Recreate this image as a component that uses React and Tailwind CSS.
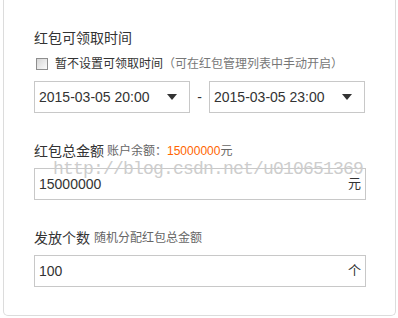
import React from "react";

const Arrow = () => (
  <svg width="10" height="6" viewBox="0 0 10 6" className="shrink-0">
    <path d="M0 0 H10 L5 6 Z" fill="#333" />
  </svg>
);

const DateSelect = ({ value }) => (
  <div className="w-[156px] h-[32px] border border-[#c8c8c8] bg-white flex items-center justify-between pl-[4px] pr-[12px]">
    <span className="text-[14px] leading-[16px] text-[#333]">{value}</span>
    <Arrow />
  </div>
);

const UnitInput = ({ value, unit }) => (
  <div className="w-[332px] h-[32px] border border-[#c8c8c8] bg-white flex items-center justify-between pl-[4px] pr-[4px]">
    <span className="text-[14px] leading-[14px] text-[#333]">{value}</span>
    <span className="text-[13px] leading-[14px] text-[#333]">{unit}</span>
  </div>
);

export default function App() {
  return (
    <div
      className="w-[398px] h-[318px] bg-white overflow-hidden"
      style={{ fontFamily: '"Liberation Sans", "Noto Sans CJK SC", sans-serif' }}
    >
      <div className="relative ml-[3px] w-[393px] border-x border-b border-[#dcdcdc] rounded-b-[5px] pl-[30px] pt-[28px] pb-[28px]">
        <div className="h-[20px] leading-[20px] text-[14px] text-[#333]">红包可领取时间</div>

        <div className="mt-[6px] h-[20px] flex items-center">
          <div className="ml-[2px] w-[12px] h-[12px] border border-[#8e8e8e] bg-gradient-to-br from-[#d6d6d6] to-[#fbfbfb]" />
          <span className="ml-[7px] text-[12px] text-[#333]">暂不设置可领取时间</span>
          <span className="text-[12px] text-[#777]">（可在红包管理列表中手动开启）</span>
        </div>

        <div className="mt-[7px] flex items-center">
          <DateSelect value="2015-03-05 20:00" />
          <span className="w-[19px] text-center text-[14px] text-[#333]">-</span>
          <DateSelect value="2015-03-05 23:00" />
        </div>

        <div className="mt-[28px] h-[20px] flex items-center">
          <span className="text-[14px] text-[#333]">红包总金额</span>
          <span className="ml-[3px] text-[12px] text-[#666]">账户余额：</span>
          <span className="text-[12px] text-[#ff6600]">15000000</span>
          <span className="text-[12px] text-[#666]">元</span>
        </div>
        <div className="mt-[7px]">
          <UnitInput value="15000000" unit="元" />
        </div>

        <div className="mt-[28px] h-[20px] flex items-center">
          <span className="text-[14px] text-[#333]">发放个数</span>
          <span className="ml-[4px] text-[12px] text-[#666]">随机分配红包总金额</span>
        </div>
        <div className="mt-[7px]">
          <UnitInput value="100" unit="个" />
        </div>

        <div
          className="absolute left-[49px] top-[162px] text-[18px] leading-[14px] tracking-[-0.8px] text-[#cdcdcd] pointer-events-none"
          style={{ fontFamily: '"Liberation Mono", monospace' }}
        >
          http://blog.csdn.net/u010651369
        </div>
      </div>
    </div>
  );
}
